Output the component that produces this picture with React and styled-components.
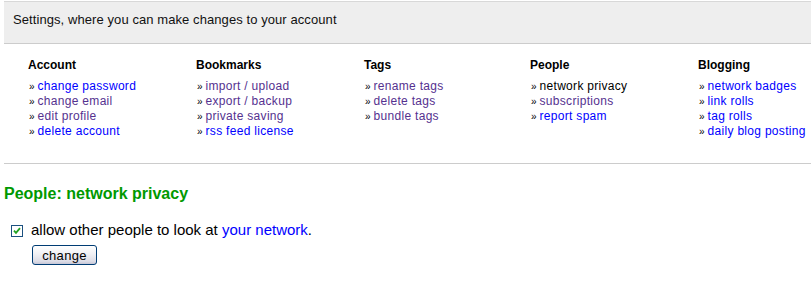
import React from "react";
import styled, { createGlobalStyle } from "styled-components";

const Global = createGlobalStyle`
  html, body { margin: 0; padding: 0; background: #fff; overflow: hidden; }
  body { font-family: "Liberation Sans", Arial, sans-serif; color: #000; }
`;

const Page = styled.div`
  margin-left: 4px;
`;

const HeaderBar = styled.div`
  margin-top: 1px;
  background: #eeeeee;
  border-top: 1px solid #d8d8d8;
  border-bottom: 1px solid #cccccc;
  padding: 10px 9px 15px;
  font-size: 13px;
  line-height: 16px;
  letter-spacing: 0.08px;
  color: #111;
`;

const Columns = styled.div`
  display: flex;
  padding: 14px 0 0 24px;
`;

const Column = styled.div`
  flex: 0 0 ${(p) => (p.$width ? `${p.$width}px` : "auto")};
  white-space: nowrap;
`;

const ColTitle = styled.div`
  font-weight: bold;
  font-size: 12px;
  line-height: 15px;
  margin-bottom: 6px;
`;

const LinkList = styled.ul`
  list-style: none;
  margin: 0;
  padding: 0;
`;

const Item = styled.li`
  font-size: 12px;
  line-height: 15px;
  height: 15px;
`;

const Bullet = styled.span`
  font-size: 10px;
  color: #000;
  margin-right: 3px;
  margin-left: 1px;
`;

const NavLink = styled.a`
  text-decoration: none;
  letter-spacing: 0.3px;
  color: ${(p) => (p.$state === "current" ? "#000" : p.$state === "visited" ? "#55318f" : "#0000ff")};
  cursor: pointer;
`;

const Divider = styled.hr`
  border: 0;
  border-top: 1px solid #cccccc;
  margin: 24px 0 0;
  height: 0;
`;

const SectionTitle = styled.h2`
  margin: 20px 0 0;
  font-size: 16px;
  line-height: 19px;
  font-weight: bold;
  color: #009900;
`;

const Form = styled.form`
  margin: 0;
  padding: 18px 0 0 7px;
`;

const CheckRow = styled.label`
  display: flex;
  align-items: center;
  gap: 8px;
  font-size: 15px;
  line-height: 18px;
`;

const Box = styled.span`
  box-sizing: border-box;
  width: 12px;
  height: 12px;
  border: 1px solid #1c5180;
  background: #fff;
  display: inline-flex;
  align-items: center;
  justify-content: center;
  flex-shrink: 0;
  margin-top: 1px;
`;

const InlineLink = styled.a`
  color: #0000ff;
  text-decoration: none;
`;

const Button = styled.button`
  display: block;
  margin: 6px 0 0 21px;
  width: 65px;
  height: 20px;
  padding: 0;
  border: 1px solid #003c74;
  border-radius: 3px;
  background: linear-gradient(#ffffff 0%, #f0f0f4 45%, #dcdce6 85%, #c6c6d6 100%);
  font-family: "Liberation Sans", Arial, sans-serif;
  font-size: 13px;
  letter-spacing: 0.3px;
  color: #000;
`;

const columns = [
  {
    title: "Account",
    width: 168,
    links: [
      ["change password", "link"],
      ["change email", "visited"],
      ["edit profile", "visited"],
      ["delete account", "link"],
    ],
  },
  {
    title: "Bookmarks",
    width: 168,
    links: [
      ["import / upload", "visited"],
      ["export / backup", "visited"],
      ["private saving", "visited"],
      ["rss feed license", "link"],
    ],
  },
  {
    title: "Tags",
    width: 166,
    links: [
      ["rename tags", "visited"],
      ["delete tags", "visited"],
      ["bundle tags", "visited"],
    ],
  },
  {
    title: "People",
    width: 168,
    links: [
      ["network privacy", "current"],
      ["subscriptions", "visited"],
      ["report spam", "link"],
    ],
  },
  {
    title: "Blogging",
    links: [
      ["network badges", "link"],
      ["link rolls", "link"],
      ["tag rolls", "link"],
      ["daily blog posting", "link"],
    ],
  },
];

export default function App() {
  return (
    <Page>
      <Global />
      <HeaderBar>Settings, where you can make changes to your account</HeaderBar>
      <Columns>
        {columns.map((c) => (
          <Column key={c.title} $width={c.width}>
            <ColTitle>{c.title}</ColTitle>
            <LinkList>
              {c.links.map(([label, state]) => (
                <Item key={label}>
                  <Bullet>»</Bullet>
                  <NavLink $state={state}>{label}</NavLink>
                </Item>
              ))}
            </LinkList>
          </Column>
        ))}
      </Columns>
      <Divider />
      <SectionTitle>People: network privacy</SectionTitle>
      <Form onSubmit={(e) => e.preventDefault()}>
        <CheckRow>
          <Box>
            <svg width="8" height="8" viewBox="0 0 8 8">
              <path d="M1 3.6 L3 5.8 L7 1.2" stroke="#21a121" strokeWidth="1.8" fill="none" />
            </svg>
          </Box>
          <span>
            allow other people to look at <InlineLink>your network</InlineLink>.
          </span>
        </CheckRow>
        <Button type="submit">change</Button>
      </Form>
    </Page>
  );
}
